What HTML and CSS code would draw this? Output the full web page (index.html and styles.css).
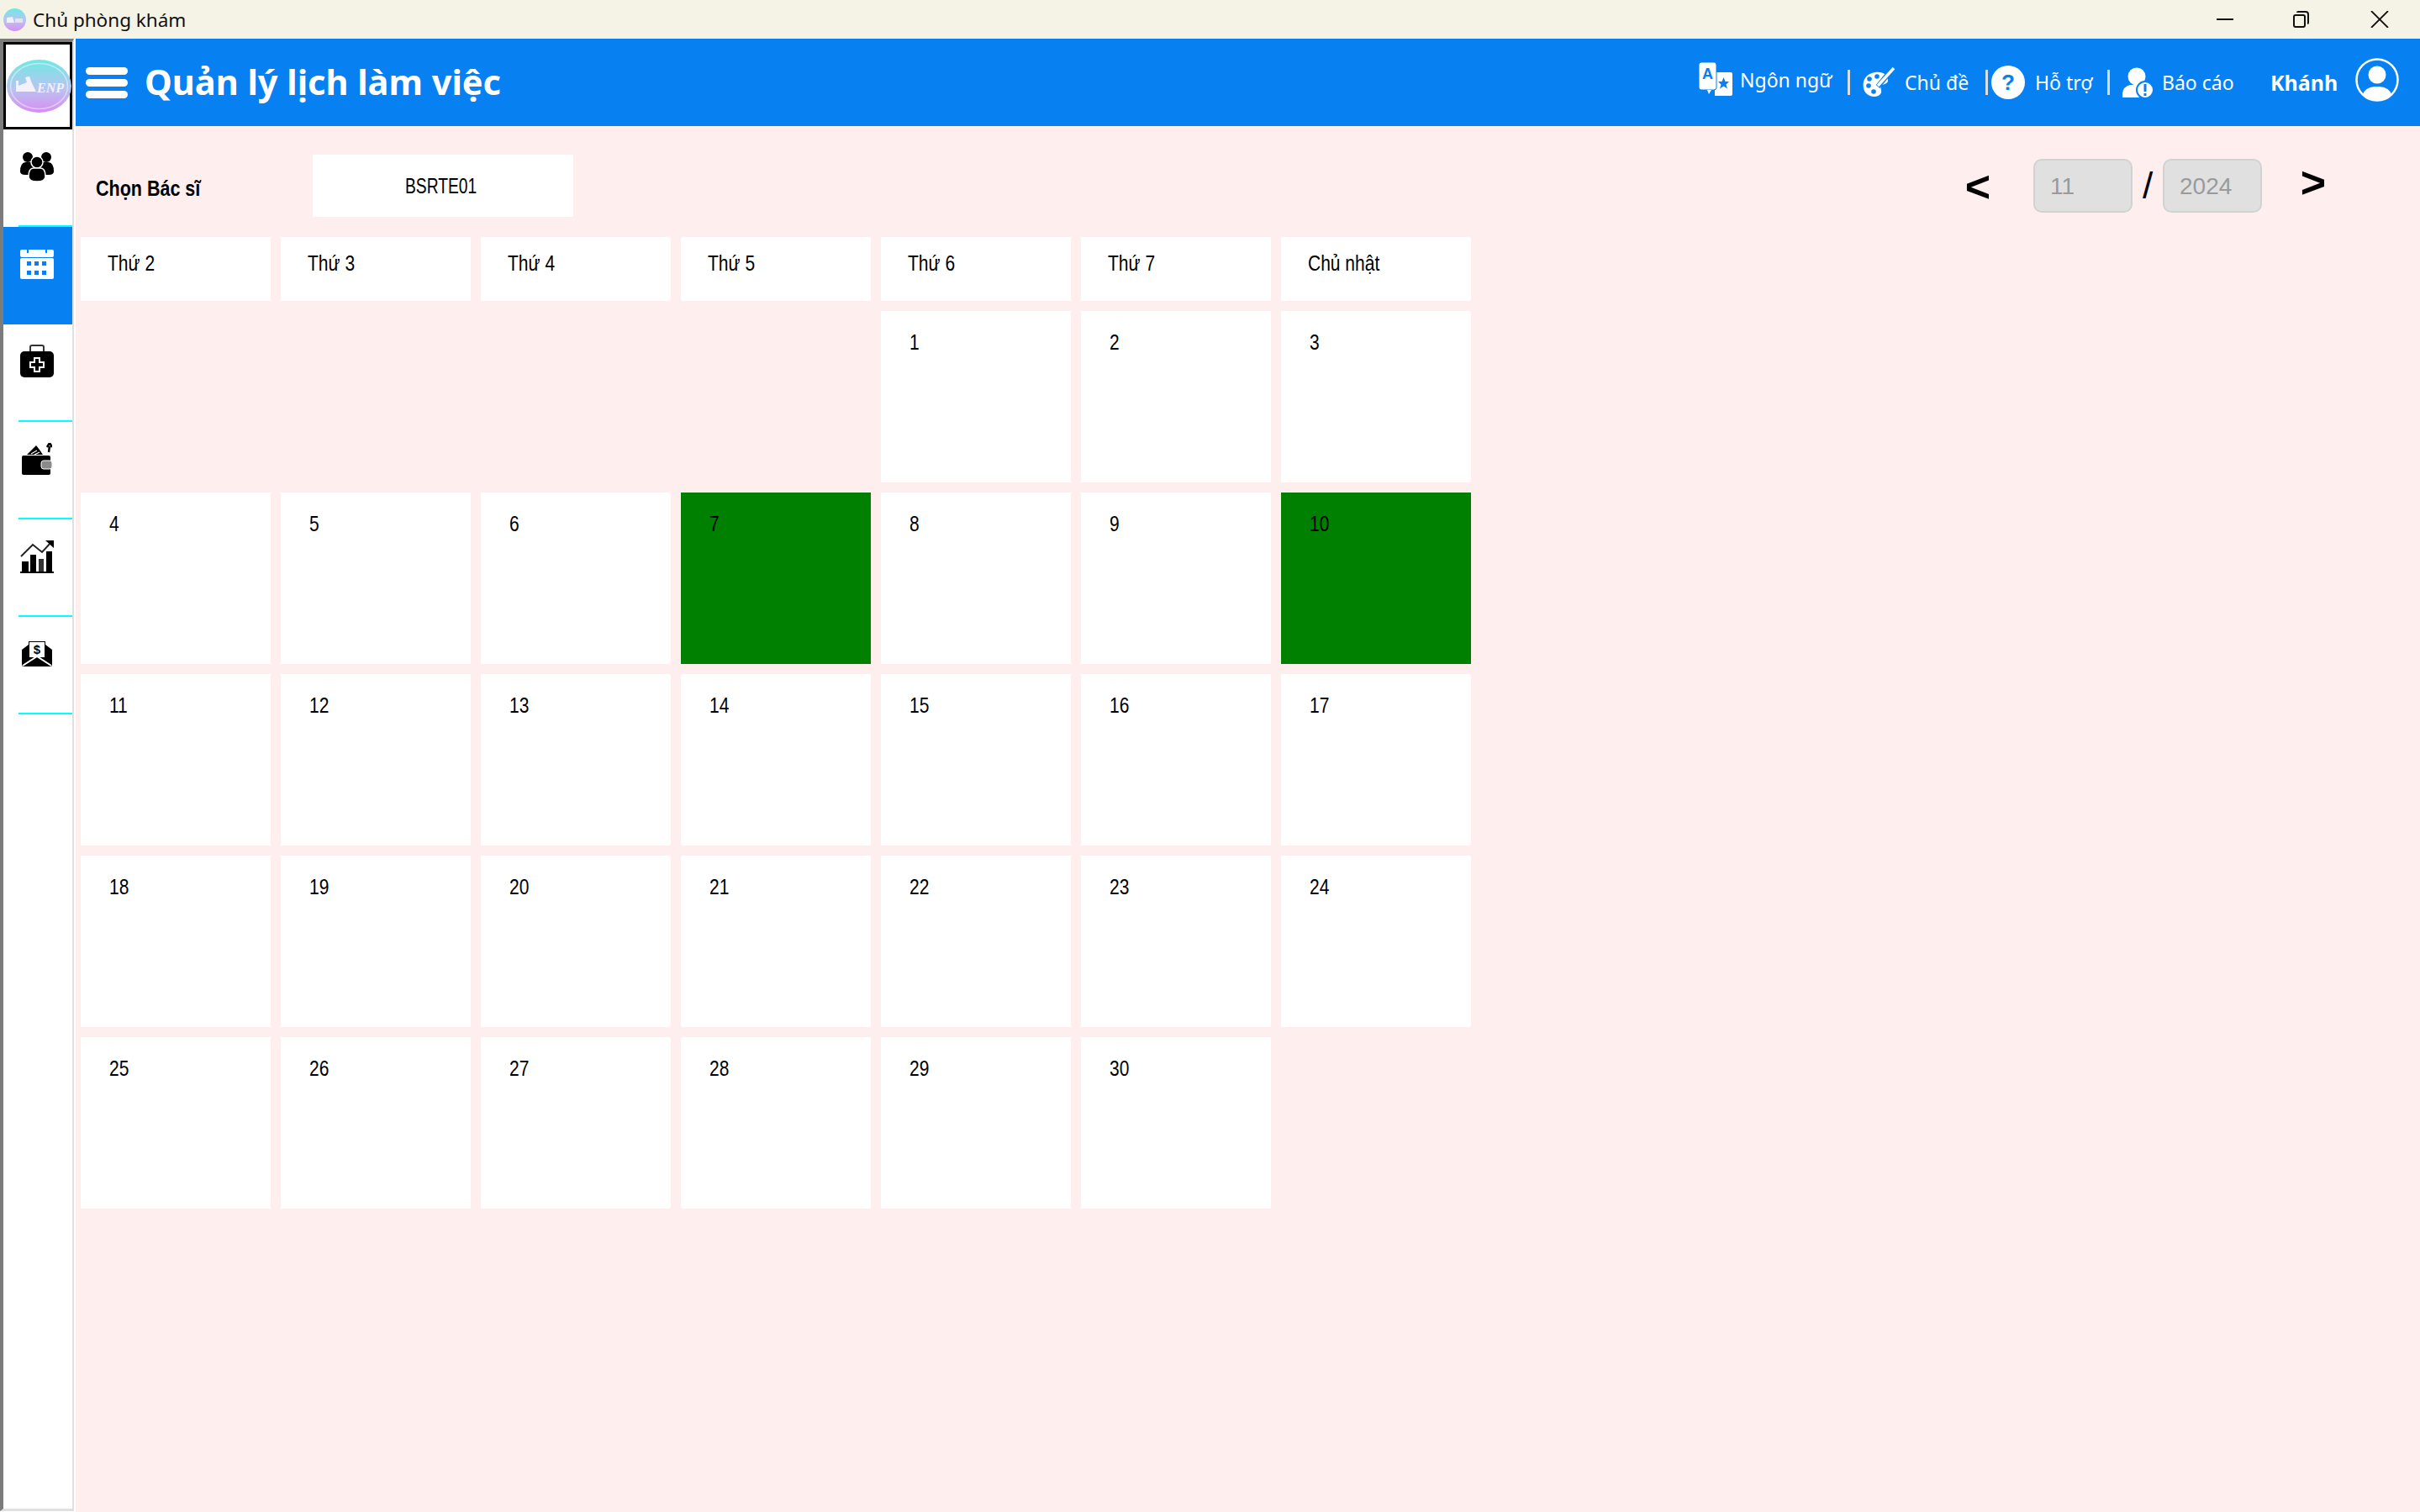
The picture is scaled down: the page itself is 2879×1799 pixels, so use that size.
FILE: index.html
```html
<!DOCTYPE html>
<html lang="en">

<head>
    <meta charset="UTF-8">
    <meta name="viewport" content="width=device-width, initial-scale=1.0">
    <title>Chủ phòng khám</title>
    <link rel="stylesheet" href="styles.css">
</head>

<body>
    <div class="titlebar">
        <svg class="app-icon" viewBox="0 0 27 27">
            <defs>
                <linearGradient id="logoSmall" x1="0" y1="0" x2="0" y2="1">
                    <stop offset="0" stop-color="#6fe8e4" />
                    <stop offset="0.55" stop-color="#b9c4f0" />
                    <stop offset="1" stop-color="#d98cf2" />
                </linearGradient>
            </defs>
            <circle cx="13.5" cy="13.5" r="13.5" fill="url(#logoSmall)" />
            <path d="M4 17 V11 L11 10 L13 17 Z" fill="#f3eefc" />
            <rect x="14" y="12" width="9" height="5" fill="#f3eefc" opacity="0.7" />
        </svg>
        <span class="app-title">Chủ phòng khám</span>
        <div class="window-buttons">
            <svg class="win-min" viewBox="0 0 20 2"><rect width="20" height="2" fill="#111" /></svg>
            <svg class="win-restore" viewBox="0 0 19 20" fill="none" stroke="#111" stroke-width="2">
                <rect x="1" y="5" width="13" height="14" rx="2" />
                <path d="M5 2 Q5 1 6 1 H15 Q18 1 18 4 V14 Q18 15 17 15" />
            </svg>
            <svg class="win-close" viewBox="0 0 22 20" stroke="#111" stroke-width="1.8"><path d="M1 0 L21 20 M21 0 L1 20" /></svg>
        </div>
    </div>

    <div class="app">
        <aside class="sidebar">
            <div class="logo-box">
                <svg class="logo" viewBox="0 0 77 63">
                    <defs>
                        <linearGradient id="logoBig" x1="0" y1="0" x2="0" y2="1">
                            <stop offset="0" stop-color="#6fe8e4" />
                            <stop offset="0.55" stop-color="#b9c4f0" />
                            <stop offset="1" stop-color="#d98cf2" />
                        </linearGradient>
                    </defs>
                    <ellipse cx="38.5" cy="31.5" rx="38.5" ry="31.5" fill="url(#logoBig)" />
                    <ellipse cx="38.5" cy="31.5" rx="34" ry="27" fill="none" stroke="#ffffff" stroke-opacity="0.45" stroke-width="1.5" />
                    <path d="M11 38 V25 L14 25 V31 L24 27 L22 21 L27 20 L30 28 L35 38 Z" fill="#f4f0fc" />
                    <text x="36" y="39" class="logo-text">ENP</text>
                </svg>
            </div>

            <div class="nav-item line">
                <svg class="side-icon" width="40" height="36" viewBox="0 0 40 36">
                    <circle cx="9" cy="7" r="6" />
                    <circle cx="31" cy="7" r="6" />
                    <path d="M0 24 Q0 14 6 13 H34 Q40 14 40 24 Q40 28 34 28 H6 Q0 28 0 24 Z" />
                    <circle cx="20" cy="13" r="7" stroke="#fff" stroke-width="1.5" />
                    <path d="M10 30 Q10 20 16 20 H24 Q30 20 30 30 Q30 36 20 36 Q10 36 10 30 Z" stroke="#fff" stroke-width="1.5" />
                </svg>
            </div>
            <div class="nav-item active">
                <svg class="side-icon" width="40" height="36" viewBox="0 0 40 36">
                    <rect y="1" width="40" height="9" rx="2" fill="#fff" />
                    <rect y="11" width="40" height="25" rx="2" fill="#fff" />
                    <path d="M8 0 H10 V5 H8 Z M30 0 H32 V5 H30 Z" fill="#0780f2" />
                    <g fill="#0780f2">
                        <rect x="8" y="15" width="5" height="5" />
                        <rect x="17" y="15" width="5" height="5" />
                        <rect x="26" y="15" width="5" height="5" />
                        <rect x="8" y="26" width="5" height="5" />
                        <rect x="17" y="26" width="5" height="5" />
                        <rect x="26" y="26" width="5" height="5" />
                    </g>
                </svg>
            </div>
            <div class="nav-item line">
                <svg class="side-icon" width="40" height="40" viewBox="0 0 40 40">
                    <path d="M12 9 V3 Q12 1 14 1 H26 Q28 1 28 3 V9" fill="none" stroke="#333" stroke-width="2" />
                    <rect y="8" width="40" height="31" rx="5" />
                    <path d="M17 16 H23 V21 H28 V27 H23 V32 H17 V27 H12 V21 H17 Z" fill="none" stroke="#fff" stroke-width="2" />
                </svg>
            </div>
            <div class="nav-item line">
                <svg class="side-icon" width="36" height="38" viewBox="0 0 36 38">
                    <rect y="15" width="34" height="23" rx="2" />
                    <path d="M6 14 L17 3 L21 8 L25 14 Z" />
                    <path d="M11 13 L18 9 M15 14 L21 11" stroke="#fff" stroke-width="1.2" />
                    <path d="M32 11 L33 4 M30 5 L33 0 L36 5" fill="none" stroke="#000" stroke-width="2.5" />
                    <rect x="23" y="21" width="13" height="10" rx="3" fill="#8a8a8a" stroke="#fff" />
                </svg>
            </div>
            <div class="nav-item line">
                <svg class="side-icon" width="40" height="40" viewBox="0 0 40 40">
                    <path d="M1 20 L15 6 L26 15 L38 2" fill="none" stroke="#222" stroke-width="2" />
                    <path d="M30 1 H40 V10 Z" />
                    <rect x="2" y="26" width="8" height="12" />
                    <rect x="12" y="18" width="7" height="20" />
                    <rect x="22" y="23" width="6" height="15" fill="#333" />
                    <rect x="31" y="14" width="7" height="24" />
                    <rect y="38" width="40" height="2" />
                </svg>
            </div>
            <div class="nav-item line">
                <svg class="side-icon" width="36" height="32" viewBox="0 0 36 32">
                    <path d="M0 11 L8 5 V1 H28 V5 L36 11 V29 Q36 31 34 31 H2 Q0 31 0 29 Z" />
                    <rect x="9" y="2" width="18" height="18" fill="#fff" />
                    <text x="18" y="16" class="mail-dollar">$</text>
                    <path d="M1 30 L18 19 L35 30" fill="none" stroke="#fff" stroke-width="2" />
                </svg>
            </div>
        </aside>

        <main class="main">
            <header class="header">
                <div class="menu-btn"><span></span><span></span><span></span></div>
                <h1 class="page-title">Quản lý lịch làm việc</h1>

                <div class="header-right">
                    <svg class="icon-lang" width="40" height="40" viewBox="0 0 40 40">
                        <path d="M22 12 H38 Q40 12 40 14 V38 Q40 40 38 40 H19 L19 12 Z" fill="#fff" />
                        <path d="M29.5 18 L31.5 23 L36 23 L32.5 26.5 L34 31.5 L29.5 28.5 L25 31.5 L26.5 26.5 L23 23 L27.5 23 Z" fill="#0780f2" />
                        <rect x="0" y="0" width="21" height="33" rx="3" fill="#fff" stroke="#0780f2" stroke-width="1" />
                        <path d="M10 33 L15 33 L12 38 Z" fill="#fff" />
                        <text x="10.5" y="20" class="lang-a">A</text>
                    </svg>
                    <span class="head-link w-lang">Ngôn ngữ</span>
                    <span class="sep s1"></span>

                    <svg class="icon-palette" width="38" height="36" viewBox="0 0 38 36">
                        <path d="M15 6 C24 5 30 9 30 16 C30 20 24 20 22 22 C20 25 24 28 21 32 C18 36 9 36 4 31 C-2 24 -1 8 15 6 Z" fill="#fff" />
                        <circle cx="17" cy="11" r="2.8" fill="#0780f2" />
                        <circle cx="8" cy="14" r="2.8" fill="#0780f2" />
                        <circle cx="7" cy="22" r="2.8" fill="#0780f2" />
                        <circle cx="13" cy="29" r="2.8" fill="#0780f2" />
                        <path d="M18 23 L36 1" stroke="#0780f2" stroke-width="6" />
                        <path d="M18 22 L37 1" stroke="#fff" stroke-width="3.5" />
                    </svg>
                    <span class="head-link w-theme">Chủ đề</span>
                    <span class="sep s2"></span>

                    <svg class="icon-help" width="40" height="40" viewBox="0 0 40 40">
                        <circle cx="20" cy="20" r="20" fill="#fff" />
                        <text x="20" y="29" class="help-mark">?</text>
                    </svg>
                    <span class="head-link w-help">Hỗ trợ</span>
                    <span class="sep s3"></span>

                    <svg class="icon-report" width="36" height="36" viewBox="0 0 36 36">
                        <circle cx="17" cy="11" r="10.5" fill="#fff" />
                        <path d="M0 36 V31 Q1 23 9 21 H24 L28 36 Z" fill="#fff" />
                        <circle cx="27" cy="27" r="10" fill="#fff" stroke="#0780f2" stroke-width="2" />
                        <rect x="25.5" y="20" width="3" height="9" fill="#0780f2" />
                        <rect x="25.5" y="31" width="3" height="3" fill="#0780f2" />
                    </svg>
                    <span class="head-link w-report">Báo cáo</span>

                    <span class="user-name">Khánh</span>
                    <svg class="icon-user" width="52" height="52" viewBox="0 0 52 52">
                        <circle cx="26" cy="26" r="24.5" fill="none" stroke="#fff" stroke-width="2.5" />
                        <circle cx="26" cy="20" r="10.5" fill="#fff" />
                        <path d="M9 43 C12 36 18 34 26 34 C34 34 40 36 43 43 C38 49 32 51 26 51 C20 51 14 49 9 43 Z" fill="#fff" />
                    </svg>
                </div>
            </header>

            <section class="content">
                <div class="toolbar">
                    <label class="doctor-label"><span>Chọn Bác sĩ</span></label>
                    <div class="doctor-select"><span>BSRTE01</span></div>

                    <div class="month-nav">
                        <span class="arrow prev">&lt;</span>
                        <div class="month-box">11</div>
                        <span class="slash">/</span>
                        <div class="month-box">2024</div>
                        <span class="arrow next">&gt;</span>
                    </div>
                </div>

                <div class="calendar">
                    <div class="day-name"><span>Thứ 2</span></div>
                    <div class="day-name"><span>Thứ 3</span></div>
                    <div class="day-name"><span>Thứ 4</span></div>
                    <div class="day-name"><span>Thứ 5</span></div>
                    <div class="day-name"><span>Thứ 6</span></div>
                    <div class="day-name"><span>Thứ 7</span></div>
                    <div class="day-name"><span>Chủ nhật</span></div>

                    <div class="day first-day"><span>1</span></div>
                    <div class="day"><span>2</span></div>
                    <div class="day"><span>3</span></div>
                    <div class="day"><span>4</span></div>
                    <div class="day"><span>5</span></div>
                    <div class="day"><span>6</span></div>
                    <div class="day working"><span>7</span></div>
                    <div class="day"><span>8</span></div>
                    <div class="day"><span>9</span></div>
                    <div class="day working"><span>10</span></div>
                    <div class="day"><span>11</span></div>
                    <div class="day"><span>12</span></div>
                    <div class="day"><span>13</span></div>
                    <div class="day"><span>14</span></div>
                    <div class="day"><span>15</span></div>
                    <div class="day"><span>16</span></div>
                    <div class="day"><span>17</span></div>
                    <div class="day"><span>18</span></div>
                    <div class="day"><span>19</span></div>
                    <div class="day"><span>20</span></div>
                    <div class="day"><span>21</span></div>
                    <div class="day"><span>22</span></div>
                    <div class="day"><span>23</span></div>
                    <div class="day"><span>24</span></div>
                    <div class="day"><span>25</span></div>
                    <div class="day"><span>26</span></div>
                    <div class="day"><span>27</span></div>
                    <div class="day"><span>28</span></div>
                    <div class="day"><span>29</span></div>
                    <div class="day"><span>30</span></div>
                </div>
            </section>
        </main>
    </div>
</body>

</html>
```

FILE: styles.css
```css
html,
body {
    margin: 0;
    height: 100%;
    overflow: hidden;
}

body {
    display: flex;
    flex-direction: column;
    background-color: #fff;
    font-family: "Liberation Sans", sans-serif;
    color: #000;
}

/* window title bar */
.titlebar {
    display: flex;
    align-items: center;
    height: 46px;
    flex: none;
    background-color: #f5f3e6;
}

.app-icon {
    width: 27px;
    height: 27px;
    margin-left: 4px;
}

.app-title {
    margin-left: 8px;
    font-family: "Noto Sans", sans-serif;
    font-size: 22.5px;
    color: #111;
}

.window-buttons {
    display: flex;
    align-items: center;
    margin-left: auto;
    margin-right: 37px;
}

.win-min {
    width: 20px;
    height: 2px;
}

.win-restore {
    width: 19px;
    height: 20px;
    margin-left: 71px;
}

.win-close {
    width: 22px;
    height: 20px;
    margin-left: 73px;
}

/* layout */
.app {
    display: flex;
    flex: 1;
    min-height: 0;
}

.sidebar {
    width: 88px;
    flex: none;
    box-sizing: border-box;
    border-left: 4px solid #7c7c7c;
    border-top: 4px solid #7c7c7c;
    border-right: 2px solid #e0e0e0;
    border-bottom: 3px solid #e0e0e0;
    margin-right: 2px;
    margin-bottom: 1px;
    background-color: #fff;
}

.logo-box {
    display: flex;
    align-items: center;
    justify-content: flex-end;
    height: 104px;
    box-sizing: border-box;
    border: 3px solid #000;
}

.logo {
    width: 77px;
    height: 63px;
    margin-right: -2px;
    flex: none;
}

.logo-text {
    font-family: "Liberation Serif", serif;
    font-size: 16px;
    font-weight: bold;
    font-style: italic;
    fill: #f4f0fc;
}

.nav-item {
    position: relative;
    display: flex;
    align-items: center;
    justify-content: center;
    height: 116px;
    padding-bottom: 29px;
    box-sizing: border-box;
}

.nav-item.line::after {
    content: "";
    position: absolute;
    left: 18px;
    right: 0;
    bottom: 0;
    height: 2px;
    background-color: #00ffff;
}

.nav-item.active {
    background-color: #0780f2;
}

.side-icon {
    margin-right: 2px;
}

.mail-dollar {
    font-family: "Liberation Sans", sans-serif;
    font-size: 15px;
    font-weight: bold;
    text-anchor: middle;
    fill: #000;
}

/* header */
.main {
    flex: 1;
    display: flex;
    flex-direction: column;
    min-width: 0;
    background-color: #feeeee;
}

.header {
    display: flex;
    align-items: center;
    height: 104px;
    flex: none;
    padding-left: 12px;
    background-color: #0780f2;
    color: #fff;
}

.menu-btn {
    display: flex;
    flex-direction: column;
    gap: 5px;
    width: 50px;
}

.menu-btn span {
    height: 9px;
    border-radius: 5px;
    background-color: #fff;
}

.page-title {
    margin: -3px 0 0 20px;
    font-family: "Noto Sans", sans-serif;
    font-size: 41.5px;
    font-weight: bold;
    white-space: nowrap;
}

.header-right {
    display: flex;
    align-items: center;
    margin-left: auto;
    margin-right: 25px;
}

.header-right svg {
    flex: none;
}

.head-link {
    font-family: "Noto Sans", sans-serif;
    font-size: 23px;
    white-space: nowrap;
}

.lang-a {
    font-family: "Liberation Sans", sans-serif;
    font-size: 18px;
    font-weight: bold;
    text-anchor: middle;
    fill: #0780f2;
}

.help-mark {
    font-family: "Liberation Sans", sans-serif;
    font-size: 26px;
    font-weight: bold;
    text-anchor: middle;
    fill: #0780f2;
}

.sep {
    width: 3px;
    height: 30px;
    flex: none;
    background-color: #d8dde6;
}

.icon-lang {
    margin-top: -8px;
}

.w-lang {
    width: 108px;
    margin-left: 9px;
    margin-top: -6px;
}

.s1 {
    margin-left: 20px;
}

.icon-palette {
    margin-left: 15px;
}

.w-theme {
    width: 75px;
    margin-left: 12px;
}

.s2 {
    margin-left: 21px;
}

.icon-help {
    margin-left: 4px;
}

.w-help {
    width: 66px;
    margin-left: 12px;
}

.s3 {
    margin-left: 20px;
}

.icon-report {
    margin-left: 15px;
}

.w-report {
    width: 82px;
    margin-left: 11px;
}

.user-name {
    width: 80px;
    margin-left: 47px;
    font-family: "Noto Sans", sans-serif;
    font-size: 25px;
    font-weight: bold;
}

.icon-user {
    margin-left: 21px;
    margin-top: -6px;
}

/* toolbar above the calendar */
.content {
    padding: 34px 0 0 6px;
}

.toolbar {
    display: flex;
    align-items: center;
    height: 74px;
    margin-bottom: 24px;
}

.doctor-label,
.doctor-select,
.day-name,
.day {
    font-size: 25px;
}

/* the app squeezes its text, Liberation Sans is wider */
.doctor-label span,
.doctor-select span,
.day-name span,
.day span {
    display: inline-block;
    transform: scaleX(0.84);
    transform-origin: left center;
}

.doctor-label {
    width: 276px;
    padding-left: 18px;
    box-sizing: border-box;
    font-weight: bold;
    margin-top: 6px;
}

.doctor-label span {
    transform: scaleX(0.86);
}

.doctor-select {
    display: flex;
    align-items: center;
    justify-content: center;
    width: 310px;
    height: 74px;
    box-sizing: border-box;
    padding-left: 20px;
    background-color: #fff;
}

.doctor-select span {
    transform: scaleX(0.77);
}

.month-nav {
    display: flex;
    align-items: center;
    margin-left: auto;
    margin-right: 111px;
    height: 74px;
}

.arrow {
    font-family: "Liberation Sans", sans-serif;
    font-size: 52px;
    font-weight: bold;
    line-height: 1;
    width: 32px;
    text-align: center;
}

.prev {
    margin-right: 50px;
    margin-left: -2px;
    margin-top: 2px;
}

.next {
    margin-left: 45px;
    margin-top: -8px;
}

.month-box {
    width: 118px;
    height: 64px;
    box-sizing: border-box;
    padding-left: 18px;
    border: 2px solid #d2d2d2;
    border-radius: 10px;
    background-color: #e0e0e0;
    font-family: "Liberation Sans", sans-serif;
    font-size: 28px;
    line-height: 62px;
    color: #9a9a9a;
}

.slash {
    width: 36px;
    text-align: center;
    font-family: "Liberation Sans", sans-serif;
    font-size: 44px;
}

/* calendar */
.calendar {
    display: grid;
    grid-template-columns: repeat(7, 226px);
    grid-template-rows: 76px repeat(5, 204px);
    gap: 12px;
}

.day-name,
.day {
    background-color: #fff;
}

.day-name {
    padding: 17px 0 0 32px;
}

.day {
    padding: 23px 0 0 34px;
}

.first-day {
    grid-column-start: 5;
}

.day.working {
    background-color: #008000;
}
```
